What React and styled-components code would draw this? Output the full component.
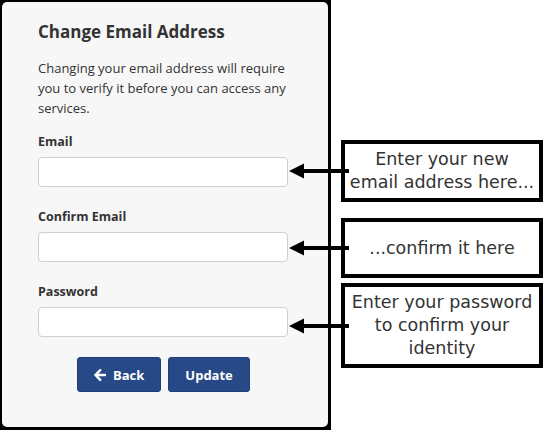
import React from "react";
import styled, { createGlobalStyle } from "styled-components";

const Global = createGlobalStyle`
  html, body { margin: 0; padding: 0; background: #ffffff; }
  * { box-sizing: border-box; }
`;

const Page = styled.div`
  width: 546px;
  height: 430px;
  display: flex;
  background: #ffffff;
  overflow: hidden;
`;

const Frame = styled.div`
  width: 331px;
  height: 430px;
  flex: none;
  background: #000;
  padding: 2px 3px 3px 2px;
`;

const Panel = styled.div`
  height: 100%;
  background: #f7f7f7;
  border-radius: 5px;
  padding: 18px 0 0 36px;
  font-family: "Open Sans", "Noto Sans", sans-serif;
  color: #333;
`;

const Title = styled.h1`
  margin: 0;
  font-size: 17px;
  line-height: 24px;
  font-weight: 700;
  color: #333;
`;

const Intro = styled.p`
  margin: 14px 0 0;
  width: 260px;
  font-size: 13px;
  line-height: 20px;
  color: #333;
`;

const Form = styled.div`
  margin-top: 14px;
  width: 250px;
`;

const Group = styled.div`
  display: flex;
  flex-direction: column;
  gap: 5px;
  margin-bottom: 20px;
`;

const Label = styled.label`
  font-size: 12.5px;
  line-height: 20px;
  font-weight: 700;
  color: #333;
`;

const Input = styled.input`
  width: 250px;
  height: 30px;
  border: 1px solid #cfcfcf;
  border-radius: 4px;
  background: #fff;
  outline: none;
  padding: 0 8px;
`;

const Buttons = styled.div`
  display: flex;
  gap: 7px;
  margin-left: 39px;
`;

const Button = styled.button`
  height: 35px;
  padding: 0 ${(p) => p.$px}px;
  display: flex;
  align-items: center;
  gap: 7px;
  background: #284987;
  border: 1px solid #223f78;
  border-radius: 3px;
  color: #fff;
  font-family: "Open Sans", "Noto Sans", sans-serif;
  font-size: 13px;
  font-weight: 700;
`;

const Notes = styled.div`
  flex: 1;
  display: flex;
  flex-direction: column;
  padding: 140px 3px 0 10px;
`;

const Note = styled.div`
  position: relative;
  height: ${(p) => p.$h}px;
  margin-top: ${(p) => p.$mt}px;
  border: 4px solid #000;
  background: #fff;
  display: flex;
  align-items: center;
  justify-content: center;
  text-align: center;
  font-family: "DejaVu Sans", "Lato", sans-serif;
  font-size: 17.5px;
  line-height: 23px;
  color: #333;
`;

const Arrow = styled.svg`
  position: absolute;
  right: 100%;
  top: 50%;
  transform: translateY(-50%);
  margin-right: -4px;
  width: 60px;
  height: 16px;
`;

const Pointer = () => (
  <Arrow viewBox="0 0 60 16">
    <polygon points="0,8 15,0.5 15,15.5" fill="#000" />
    <rect x="13" y="6" width="47" height="4" fill="#000" />
  </Arrow>
);

const BackIcon = () => (
  <svg width="12" height="12" viewBox="0 0 12 12">
    <path d="M6.2 1.2 L1.4 6 L6.2 10.8 M1.8 6 H11" stroke="#fff" strokeWidth="2.4" fill="none" strokeLinecap="round" strokeLinejoin="round" />
  </svg>
);

export default function App() {
  return (
    <Page>
      <Global />
      <Frame>
        <Panel>
          <Title>Change Email Address</Title>
          <Intro>
            Changing your email address will require you to verify it before you can access any services.
          </Intro>
          <Form>
            <Group>
              <Label>Email</Label>
              <Input type="email" />
            </Group>
            <Group>
              <Label>Confirm Email</Label>
              <Input type="email" />
            </Group>
            <Group>
              <Label>Password</Label>
              <Input type="password" />
            </Group>
          </Form>
          <Buttons>
            <Button $px={16}>
              <BackIcon />
              Back
            </Button>
            <Button $px={16}>Update</Button>
          </Buttons>
        </Panel>
      </Frame>
      <Notes>
        <Note $h={62} $mt={0}>
          <Pointer />
          Enter your new
          <br />
          email address here...
        </Note>
        <Note $h={60} $mt={16}>
          <Pointer />
          ...confirm it here
        </Note>
        <Note $h={85} $mt={5}>
          <Pointer />
          Enter your password
          <br />
          to confirm your
          <br />
          identity
        </Note>
      </Notes>
    </Page>
  );
}
